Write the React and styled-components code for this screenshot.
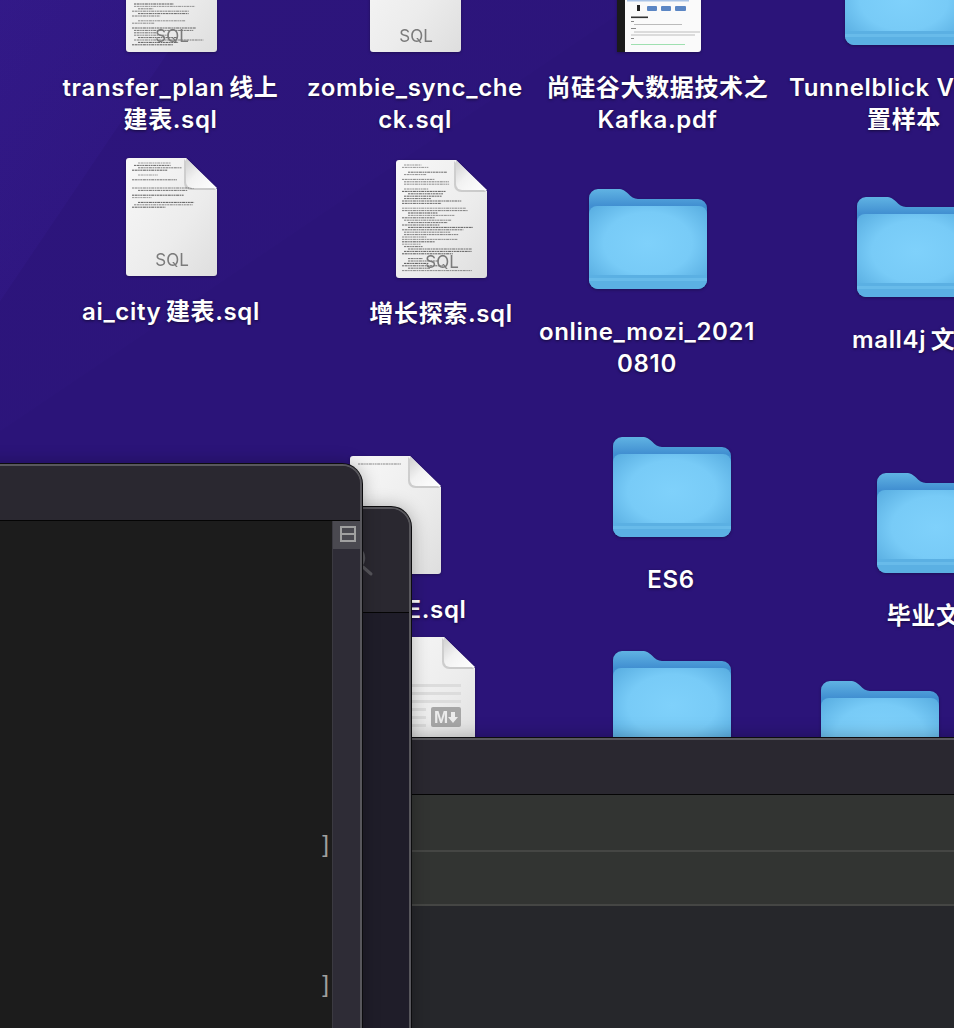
import React from "react";
import styled, { createGlobalStyle } from "styled-components";

const GlobalStyle = createGlobalStyle`
  html, body {
    margin: 0;
    height: 100%;
    overflow: hidden;
    background: #2b1479;
  }
`;

// the wallpaper, with its two faint diagonal bands
const Desktop = styled.div`
  position: relative;
  width: 100vw;
  height: 100vh;
  overflow: hidden;
  font-family: Inter, "Noto Sans CJK SC", sans-serif;
  background:
    linear-gradient(124deg, rgba(70, 40, 180, 0.2) 0, rgba(70, 40, 180, 0.1) 168px, transparent 169px),
    linear-gradient(146deg, rgba(60, 30, 150, 0.12) 0, rgba(60, 30, 150, 0.07) 357px, transparent 358px),
    #2b1479;
`;

// --- desktop items ---

const Item = styled.div`
  position: absolute;
  left: ${(p) => p.$center - 130}px;
  top: ${(p) => p.$top}px;
  width: 260px;
  display: flex;
  flex-direction: column;
  align-items: center;
  gap: ${(p) => p.$gap}px;
`;

const IconSvg = styled.svg`
  display: block;
  flex: none;
  filter: drop-shadow(0 1px 1.5px rgba(0, 0, 0, 0.3));
`;

const Label = styled.div`
  display: flex;
  flex-direction: column;
  align-items: center;
  margin-left: ${(p) => p.$shift}px;
  color: #fff;
  font-size: 24px;
  font-weight: 600;
  line-height: 32px;
  letter-spacing: 0.65px;
  white-space: nowrap;
  text-shadow: 0 1px 3px rgba(0, 0, 0, 0.55);
`;

const LabelLine = styled.span`
  display: block;
`;

const DocLabel = styled.text`
  font-family: Inter, "Liberation Sans", sans-serif;
  font-size: 17px;
  fill: #7b7b7b;
`;

const BadgeLetter = styled.text`
  font-family: "Liberation Sans", sans-serif;
  font-size: 17px;
  font-weight: 700;
  fill: #ececec;
`;

// little rows of "code" on a document preview, always the same for one seed
function codeRows(seed, from, to, wide) {
  const rows = [];
  let n = seed;
  const next = () => {
    n = (n * 7919 + 17) % 1009;
    return n / 1009;
  };
  for (let y = from; y < to; y += 2.4) {
    if (next() < 0.1) continue;
    const maxEnd = y < 30 ? 56 : wide;
    const end = 24 + next() * (maxEnd - 24);
    const indent = next() < 0.3 ? 6 : next() < 0.5 ? 8 : 12;
    rows.push(
      <line
        key={y}
        x1={indent}
        x2={end}
        y1={y}
        y2={y}
        stroke="#333"
        strokeOpacity={0.5 + next() * 0.4}
        strokeWidth="0.9"
        strokeDasharray="2 0.6 3 0.6 1.500 0.6"
      />
    );
  }
  return rows;
}

function DocIcon({ id, rows, seed = 3, label = "SQL", children }) {
  return (
    <IconSvg width="91" height="118" viewBox="0 0 91 118">
      <defs>
        <linearGradient id={`${id}-sheet`} x1="0" y1="0" x2="1" y2="1">
          <stop offset="0" stopColor="#f8f8f8" />
          <stop offset="0.6" stopColor="#ececec" />
          <stop offset="1" stopColor="#dedede" />
        </linearGradient>
        <linearGradient id={`${id}-fold`} x1="0" y1="0" x2="1" y2="1">
          <stop offset="0" stopColor="#cfcfcf" />
          <stop offset="0.45" stopColor="#f2f2f2" />
          <stop offset="1" stopColor="#ffffff" />
        </linearGradient>
      </defs>
      <path
        d="M3 0H60L91 31V115a3 3 0 0 1-3 3H3a3 3 0 0 1-3-3V3a3 3 0 0 1 3-3Z"
        fill={`url(#${id}-sheet)`}
      />
      {rows && rows.map(([from, to, wide], i) => (
        <g key={i}>{codeRows(seed + i, from, to, wide || 78)}</g>
      ))}
      {children}
      {label && (
        <DocLabel x="46" y="108" textAnchor="middle">
          {label}
        </DocLabel>
      )}
      <path d="M58 1V25a7 7 0 0 0 7 7H90Z" fill="#000" opacity="0.14" />
      <path d="M60 0V24a6 6 0 0 0 6 6H91Z" fill={`url(#${id}-fold)`} />
    </IconSvg>
  );
}

function FolderIcon({ id }) {
  return (
    <IconSvg width="118" height="100" viewBox="0 0 118 100">
      <defs>
        <linearGradient id={`${id}-back`} x1="0" y1="0" x2="0" y2="1">
          <stop offset="0" stopColor="#60b3e3" />
          <stop offset="0.42" stopColor="#418fd1" />
        </linearGradient>
        <radialGradient id={`${id}-front`} cx="0.5" cy="0.45" r="0.68">
          <stop offset="0" stopColor="#7fd1fb" />
          <stop offset="0.55" stopColor="#78cbf7" />
          <stop offset="1" stopColor="#56abdf" />
        </radialGradient>
      </defs>
      <path
        d="M0 9a9 9 0 0 1 9-9H29c5 0 7 2 10 4.500 3 3 6 5.500 10 5.500H109a9 9 0 0 1 9 9V40H0Z"
        fill={`url(#${id}-back)`}
      />
      <path
        d="M0 25a8 8 0 0 1 8-8H110a8 8 0 0 1 8 8V91a9 9 0 0 1-9 9H9a9 9 0 0 1-9-9Z"
        fill={`url(#${id}-front)`}
      />
      <path d="M0 86H118V91a9 9 0 0 1-9 9H9a9 9 0 0 1-9-9Z" fill="#5bb0e3" />
      <rect x="0" y="89" width="118" height="3" fill="#68bbea" />
    </IconSvg>
  );
}

function PdfIcon() {
  return (
    <IconSvg width="84" height="118" viewBox="0 0 84 118">
      <path d="M0 0H84V115a3 3 0 0 1-3 3H3a3 3 0 0 1-3-3Z" fill="#fafafa" />
      <rect x="0" y="0" width="8" height="118" fill="#1a1a1a" />
      <g transform="translate(0 66)">
        <rect x="10" y="0" width="62" height="1.500" fill="#a9c3e6" />
        <rect x="20" y="5" width="3" height="6" fill="#222" />
        <rect x="30" y="6" width="10" height="5" rx="1" fill="#5b86c4" />
        <rect x="44" y="6" width="10" height="5" rx="1" fill="#5b86c4" />
        <rect x="58" y="6" width="11" height="5" rx="1" fill="#5b86c4" />
        <rect x="14" y="16.500" width="17" height="1.600" fill="#333" />
        <rect x="14" y="21" width="3" height="1" fill="#888" />
        <rect x="17" y="24" width="48" height="1" fill="#bbb" />
        <rect x="14" y="28" width="5" height="1" fill="#888" />
        <rect x="17" y="31.500" width="66" height="1" fill="#bbb" />
        <rect x="14" y="34.500" width="64" height="1" fill="#bbb" />
        <rect x="14" y="38" width="3" height="1" fill="#888" />
        <rect x="14" y="44" width="54" height="1" fill="#9fe0b0" />
      </g>
    </IconSvg>
  );
}

function DeskItem({ center, top, gap = 20, shift = 0, lines, children }) {
  return (
    <Item $center={center} $top={top} $gap={gap}>
      {children}
      <Label $shift={shift}>
        {lines.map((line) => (
          <LabelLine key={line}>{line}</LabelLine>
        ))}
      </Label>
    </Item>
  );
}

// --- terminal / editor windows lying over the desktop ---

const Window = styled.div`
  position: absolute;
  left: ${(p) => p.$left}px;
  top: ${(p) => p.$top}px;
  width: ${(p) => p.$width}px;
  height: ${(p) => p.$height}px;
  box-sizing: border-box;
  display: flex;
  flex-direction: column;
  overflow: hidden;
  border: 2px solid #58575c;
  border-radius: ${(p) => p.$radius}px ${(p) => p.$radius}px 0 0;
  box-shadow: 0 0 0 1px #0c0c0e, 0 0 18px rgba(0, 0, 0, 0.3);
  background: #2a2830;
`;

const TitleBar = styled.div`
  flex: none;
  height: ${(p) => p.$height}px;
  background: #2a2830;
  border-bottom: 1px solid #050505;
`;

const WindowBody = styled.div`
  flex: 1;
  display: flex;
  min-height: 0;
  background: ${(p) => p.$bg || "transparent"};
`;

const Editor = styled.div`
  flex: 1;
  display: flex;
  flex-direction: column;
  align-items: flex-end;
  gap: 112px;
  padding: 309px 3px 0 0;
  background: #1c1c1c;
`;

const Bracket = styled.span`
  font-family: "Liberation Sans", sans-serif;
  font-size: 24px;
  line-height: 28px;
  color: #a0a0a0;
`;

const Gutter = styled.div`
  flex: none;
  width: 27px;
  background: #2e2c36;
  border-left: 1px solid #3b3a41;
`;

const SplitButton = styled.div`
  box-sizing: border-box;
  height: 28px;
  padding: 0 0 2px 2px;
  display: flex;
  align-items: center;
  justify-content: center;
  background: #4a4950;
`;

const SplitGlyph = styled.div`
  box-sizing: border-box;
  width: 16px;
  height: 16px;
  border: 2px solid #a0a0a0;
  display: flex;
  align-items: center;
  &::before {
    content: "";
    flex: 1;
    height: 2px;
    background: #a0a0a0;
  }
`;

const SearchMark = styled.svg`
  position: absolute;
  right: 34px;
  top: 36px;
`;

const Table = styled.div`
  flex: 1;
  background: #26272b;
`;

const TableRow = styled.div`
  box-sizing: border-box;
  height: ${(p) => p.$height}px;
  background: #323432;
  border-bottom: 2px solid #454644;
`;

export default function App() {
  return (
    <Desktop>
      <GlobalStyle />

      <DeskItem center={171.5} top={-66} shift={-2} lines={["transfer_plan\u2009线上", "建表.sql"]}>
        <DocIcon id="transfer" rows={[[70, 112, 78]]} seed={5} />
      </DeskItem>
      <DeskItem center={415.5} top={-66} shift={-1} lines={["zombie_sync_che", "ck.sql"]}>
        <DocIcon id="zombie" />
      </DeskItem>
      <DeskItem center={659} top={-66} shift={-3} lines={["尚硅谷大数据技术之", "Kafka.pdf"]}>
        <PdfIcon />
      </DeskItem>
      <DeskItem center={904} top={-55} gap={27} lines={["Tunnelblick VPN\u2009配", "置样本"]}>
        <FolderIcon id="vpn" />
      </DeskItem>

      <DeskItem center={171.5} top={158} shift={-1} lines={["ai_city\u2009建表.sql"]}>
        <DocIcon id="aicity" rows={[[5, 26, 56], [30, 50, 76]]} seed={11} />
      </DeskItem>
      <DeskItem center={441.5} top={160} shift={-1} lines={["增长探索.sql"]}>
        <DocIcon id="growth" rows={[[5, 112, 78]]} seed={23} />
      </DeskItem>
      <DeskItem center={648} top={189} gap={27} shift={-2} lines={["online_mozi_2021", "0810"]}>
        <FolderIcon id="mozi" />
      </DeskItem>
      <DeskItem center={916} top={197} gap={27} lines={["mall4j\u2009文档"]}>
        <FolderIcon id="mall" />
      </DeskItem>

      <DeskItem center={395.5} top={456} shift={-3} lines={["ORACLE.sql"]}>
        <DocIcon id="oracle" rows={[[8, 10, 56]]} seed={7} label="" />
      </DeskItem>
      <DeskItem center={672} top={437} gap={27} shift={-2} lines={["ES6"]}>
        <FolderIcon id="es6" />
      </DeskItem>
      <DeskItem center={936} top={473} gap={27} lines={["毕业文档"]}>
        <FolderIcon id="thesis" />
      </DeskItem>

      <DeskItem center={429.5} top={637} lines={["README.md"]}>
        <DocIcon id="readme" label="">
          <rect x="0" y="47" width="77" height="3" fill="#dcdcdc" />
          <rect x="0" y="55" width="77" height="3" fill="#dcdcdc" />
          <rect x="0" y="63" width="77" height="3" fill="#dcdcdc" />
          <rect x="0" y="71" width="42" height="3" fill="#dcdcdc" />
          <rect x="0" y="79" width="42" height="3" fill="#dcdcdc" />
          <rect x="0" y="87" width="42" height="3" fill="#dcdcdc" />
          <rect x="47" y="70" width="30" height="20" rx="2" fill="#a6a6a6" />
          <BadgeLetter x="50" y="86">M</BadgeLetter>
          <path d="M67 75h4v5h3l-5 6-5-6h3Z" fill="#ececec" />
        </DocIcon>
      </DeskItem>
      <DeskItem center={672} top={651} gap={27} lines={["project"]}>
        <FolderIcon id="projecta" />
      </DeskItem>
      <DeskItem center={880} top={681} gap={27} lines={["docs"]}>
        <FolderIcon id="projectb" />
      </DeskItem>

      <Window $left={380} $top={738} $width={700} $height={400} $radius={0}>
        <TitleBar $height={54} />
        <WindowBody>
          <Table>
            <TableRow $height={57} />
            <TableRow $height={54} />
          </Table>
        </WindowBody>
      </Window>

      <Window $left={60} $top={507} $width={351} $height={600} $radius={20}>
        <TitleBar $height={103} />
        <WindowBody $bg="#1f1d29" />
        <SearchMark width="30" height="36" viewBox="0 0 30 36">
          <circle cx="8" cy="13" r="11" fill="none" stroke="#55545a" strokeWidth="2.500" />
          <line x1="18" y1="22" x2="26" y2="29" stroke="#55545a" strokeWidth="3" strokeLinecap="round" />
        </SearchMark>
      </Window>

      <Window $left={-60} $top={464} $width={422} $height={640} $radius={20}>
        <TitleBar $height={54} />
        <WindowBody>
          <Editor>
            <Bracket>]</Bracket>
            <Bracket>]</Bracket>
          </Editor>
          <Gutter>
            <SplitButton>
              <SplitGlyph />
            </SplitButton>
          </Gutter>
        </WindowBody>
      </Window>
    </Desktop>
  );
}
